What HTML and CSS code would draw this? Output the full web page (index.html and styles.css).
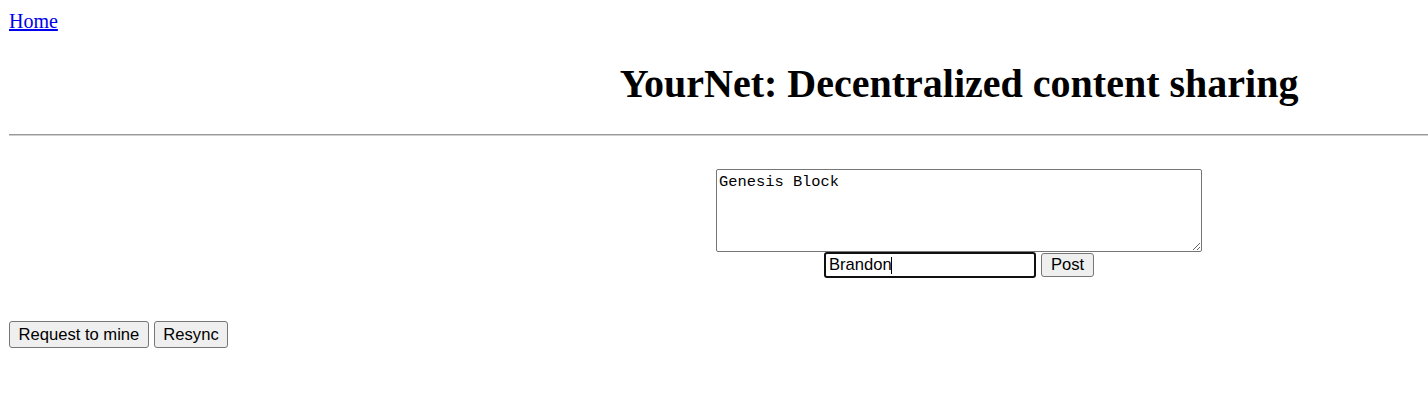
FILE: index.html
```html
<!DOCTYPE html>
<html lang="en">
<head>
<meta charset="utf-8">
<title>YourNet</title>
<link rel="stylesheet" href="styles.css">
</head>
<body>
<div class="page">
  <a class="home" href="#">Home</a>
  <h1 class="title">YourNet: Decentralized content sharing</h1>
  <hr class="rule">
  <form class="composer">
    <textarea class="post-body">Genesis Block</textarea>
    <div class="post-row">
      <span class="author-wrap"><input class="author" type="text" value="Brandon"></span>
      <button class="btn btn-post" type="button">Post</button>
    </div>
  </form>
  <div class="actions">
    <button class="btn btn-action" type="button">Request to mine</button>
    <button class="btn btn-action" type="button">Resync</button>
  </div>
</div>
</body>
</html>
```

FILE: styles.css
```css
html {
  overflow: hidden;
}

body {
  margin: 0;
  background: #fff;
  color: #000;
  font-family: "Liberation Serif", "Times New Roman", serif;
}

.page {
  width: 1900px;
  padding: 10px 0 0 9px;
  display: flex;
  flex-direction: column;
  align-items: stretch;
}

.home {
  align-self: flex-start;
  font-size: 20px;
  line-height: 23px;
  color: #0000ee;
  text-decoration: underline;
}

.title {
  margin: 28px 0 0;
  font-size: 40px;
  line-height: 46px;
  font-weight: bold;
  text-align: center;
}

.rule {
  margin: 27px 0 0;
  height: 0;
  border: 0;
  border-top: 1px solid #9a9a9a;
  border-bottom: 1px solid #cfcfcf;
}

.composer {
  margin: 33px 0 0;
  display: flex;
  flex-direction: column;
  align-items: center;
}

.post-body {
  box-sizing: border-box;
  width: 486px;
  height: 83px;
  margin: 0;
  padding: 4px 2px 2px;
  border: 1px solid #767676;
  border-radius: 2px;
  font-family: "Liberation Mono", "DejaVu Sans Mono", monospace;
  font-size: 15.4px;
  line-height: 17px;
  color: #000;
  resize: both;
}

.post-row {
  display: flex;
  align-items: center;
  gap: 5px;
}

.author-wrap {
  position: relative;
  display: block;
}

.author-wrap::after {
  content: "";
  position: absolute;
  left: 67px;
  top: 5px;
  width: 1px;
  height: 17px;
  background: #000;
}

.author {
  display: block;
  box-sizing: border-box;
  width: 212px;
  height: 26px;
  margin: 0;
  padding: 0 3px;
  border: 2px solid #101010;
  border-radius: 3px;
  outline: none;
  font-family: "Liberation Sans", Arial, sans-serif;
  font-size: 16.6px;
  color: #000;
  background: #fff;
}

.btn {
  box-sizing: border-box;
  margin: 0;
  padding: 0 8.5px;
  border: 1px solid #767676;
  border-radius: 3px;
  background: #efefef;
  color: #000;
  font-family: "Liberation Sans", Arial, sans-serif;
  font-size: 16.6px;
  line-height: 20px;
}

.btn-post {
  width: 53px;
  height: 24px;
  padding: 0;
}

.actions {
  margin-top: 43px;
  display: flex;
  gap: 5px;
}

.btn-action {
  height: 27px;
}
```
